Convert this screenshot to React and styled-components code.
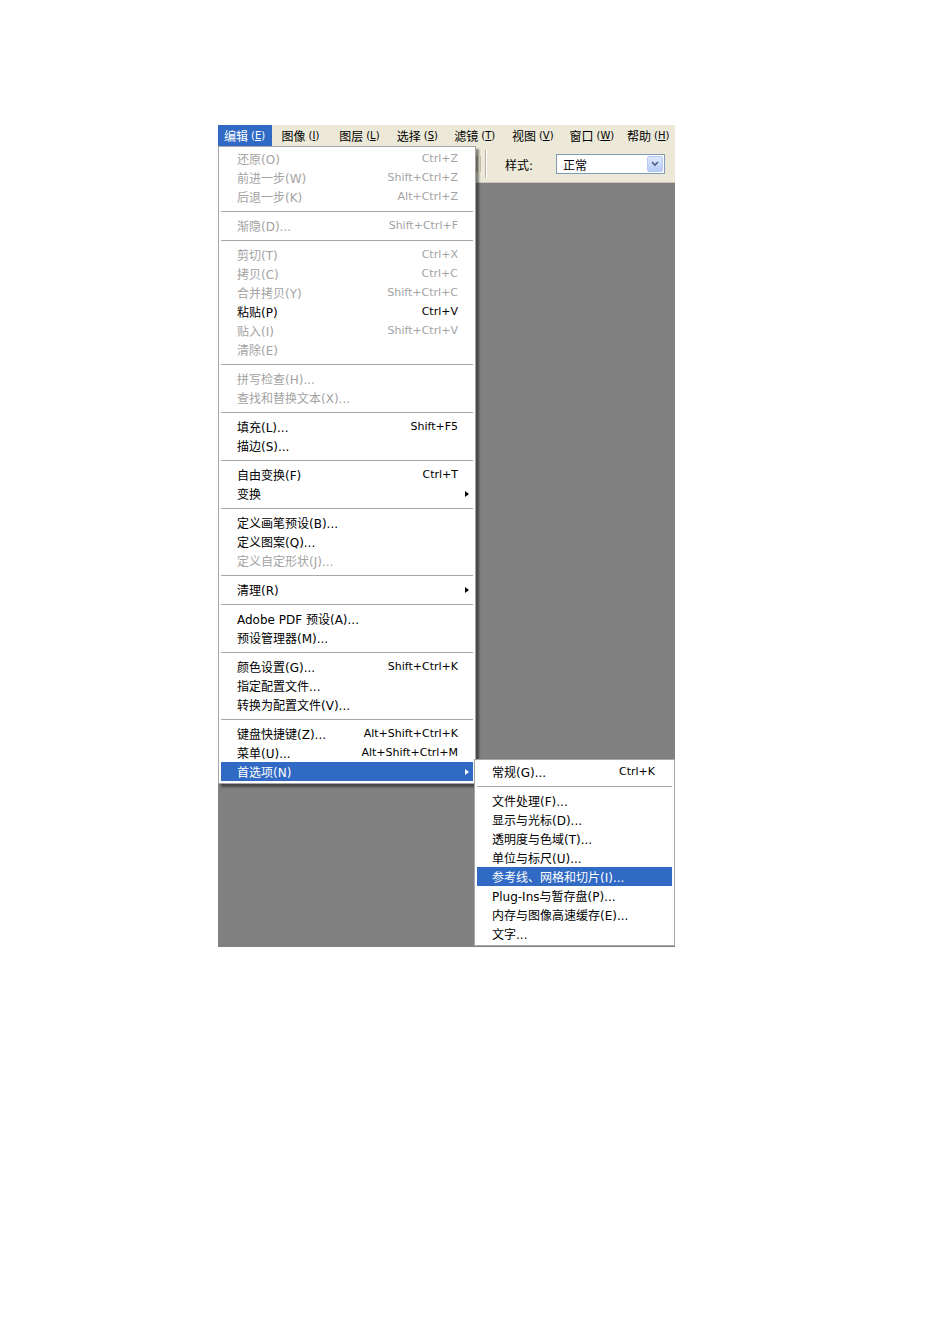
import React from "react";
import styled, { createGlobalStyle } from "styled-components";

const Global = createGlobalStyle`
  html, body { margin: 0; padding: 0; background: #fff; }
  body { font-family: "DejaVu Sans", "Noto Sans CJK SC", sans-serif; }
`;

const Page = styled.div`
  width: 950px;
  height: 1344px;
  padding: 125px 0 0 218px;
  box-sizing: border-box;
`;

const Figure = styled.div`
  position: relative;
  width: 457px;
  height: 822px;
  display: flex;
  flex-direction: column;
  font-family: "DejaVu Sans", "Noto Sans CJK SC", sans-serif;
  font-size: 12px;
  color: #000;
`;

const MenuBar = styled.div`
  height: 21px;
  background: #ece9d8;
  display: flex;
  align-items: stretch;
  gap: 3.6px;
`;

const MenuTitle = styled.div`
  width: 54px;
  box-sizing: border-box;
  padding-left: 6px;
  display: flex;
  align-items: center;
  white-space: nowrap;
  font-family: "Noto Sans CJK SC", sans-serif;
  background: ${(p) => (p.$active ? "#316ac5" : "transparent")};
  color: ${(p) => (p.$active ? "#fff" : "#000")};
`;

const Mnemonic = styled.span`
  font-family: "DejaVu Sans", sans-serif;
  font-size: 10px;
  margin-left: 3px;
  & u { text-decoration: underline; }
`;

const Toolbar = styled.div`
  height: 37px;
  box-sizing: border-box;
  background: #ece9d8;
  border-bottom: 1px solid #c9c6b8;
  display: flex;
  align-items: center;
  padding-left: 258px;
`;

const ToolStub = styled.div`
  width: 5px;
  height: 16px;
  border-left: 2px solid #b8b5a8;
  border-right: 1px solid #c9c6b8;
  box-sizing: border-box;
`;

const ToolSep = styled.div`
  width: 1px;
  height: 28px;
  background: #b5b2a4;
  border-right: 1px solid #fff;
  margin-left: 4px;
`;

const ToolLabel = styled.span`
  margin-left: 18px;
  width: 33px;
  font-size: 12px;
`;

const Select = styled.div`
  margin-left: 18px;
  width: 109px;
  height: 20px;
  box-sizing: border-box;
  background: #fff;
  border: 1px solid #7f9db9;
  display: flex;
  align-items: center;
  padding-left: 6px;
  font-size: 12px;
`;

const SelectText = styled.span`
  flex: 1;
`;

const SelectBtn = styled.div`
  width: 16px;
  height: 16px;
  margin-right: 1px;
  border-radius: 2px;
  background: linear-gradient(#dde8fd, #b7cdf7);
  border: 1px solid #b6c9ef;
  box-sizing: border-box;
  display: flex;
  align-items: center;
  justify-content: center;
`;

const Canvas = styled.div`
  flex: 1;
  background: #808080;
`;

const Menu = styled.div`
  position: absolute;
  left: ${(p) => p.$left}px;
  top: ${(p) => p.$top}px;
  width: ${(p) => p.$width}px;
  box-sizing: border-box;
  background: #fff;
  border: 1px solid #a7a6aa;
  padding: 2px 0;
  box-shadow: ${(p) => (p.$shadow ? "3px 3px 2px rgba(0,0,0,0.45)" : "none")};
`;

const Row = styled.div`
  height: 19px;
  margin: 0 2px;
  display: grid;
  grid-template-columns: 1fr auto ${(p) => p.$right}px;
  align-items: center;
  padding-left: ${(p) => p.$left}px;
  white-space: nowrap;
  background: ${(p) => (p.$hi ? "#316ac5" : "transparent")};
  color: ${(p) => (p.$hi ? "#fff" : p.$dis ? "#a3a3a3" : "#000")};
`;

const Label = styled.span`
  font-size: 12px;
`;

const Shortcut = styled.span`
  text-align: right;
  font-size: 11px;
`;

const ArrowCell = styled.span`
  display: flex;
  justify-content: flex-end;
  padding-right: 4px;
`;

const Arrow = styled.span`
  width: 0;
  height: 0;
  border-left: 4px solid ${(p) => (p.$hi ? "#fff" : "#000")};
  border-top: 3.5px solid transparent;
  border-bottom: 3.5px solid transparent;
`;

const Separator = styled.div`
  height: 10px;
  display: flex;
  align-items: center;
  margin: 0 2px;
  &::after {
    content: "";
    flex: 1;
    height: 1px;
    background: #a7a6aa;
  }
`;

const titles = [
  ["编辑", "E"],
  ["图像", "I"],
  ["图层", "L"],
  ["选择", "S"],
  ["滤镜", "T"],
  ["视图", "V"],
  ["窗口", "W"],
  ["帮助", "H"],
];

const mainItems = [
  ["还原(O)", "Ctrl+Z", "d"],
  ["前进一步(W)", "Shift+Ctrl+Z", "d"],
  ["后退一步(K)", "Alt+Ctrl+Z", "d"],
  "-",
  ["渐隐(D)...", "Shift+Ctrl+F", "d"],
  "-",
  ["剪切(T)", "Ctrl+X", "d"],
  ["拷贝(C)", "Ctrl+C", "d"],
  ["合并拷贝(Y)", "Shift+Ctrl+C", "d"],
  ["粘贴(P)", "Ctrl+V"],
  ["贴入(I)", "Shift+Ctrl+V", "d"],
  ["清除(E)", "", "d"],
  "-",
  ["拼写检查(H)...", "", "d"],
  ["查找和替换文本(X)...", "", "d"],
  "-",
  ["填充(L)...", "Shift+F5"],
  ["描边(S)..."],
  "-",
  ["自由变换(F)", "Ctrl+T"],
  ["变换", "", "a"],
  "-",
  ["定义画笔预设(B)..."],
  ["定义图案(Q)..."],
  ["定义自定形状(J)...", "", "d"],
  "-",
  ["清理(R)", "", "a"],
  "-",
  ["Adobe PDF 预设(A)..."],
  ["预设管理器(M)..."],
  "-",
  ["颜色设置(G)...", "Shift+Ctrl+K"],
  ["指定配置文件..."],
  ["转换为配置文件(V)..."],
  "-",
  ["键盘快捷键(Z)...", "Alt+Shift+Ctrl+K"],
  ["菜单(U)...", "Alt+Shift+Ctrl+M"],
  ["首选项(N)", "", "ah"],
];

const subItems = [
  ["常规(G)...", "Ctrl+K"],
  "-",
  ["文件处理(F)..."],
  ["显示与光标(D)..."],
  ["透明度与色域(T)..."],
  ["单位与标尺(U)..."],
  ["参考线、网格和切片(I)...", "", "h"],
  ["Plug-Ins与暂存盘(P)..."],
  ["内存与图像高速缓存(E)..."],
  ["文字..."],
];

function renderItems(items, left, right) {
  return items.map((it, i) => {
    if (it === "-") return <Separator key={i} />;
    const [label, sc = "", flags = ""] = it;
    const hi = flags.includes("h");
    return (
      <Row key={i} $left={left} $right={right} $hi={hi} $dis={flags.includes("d")}>
        <Label>{label}</Label>
        <Shortcut>{sc}</Shortcut>
        <ArrowCell>{flags.includes("a") && <Arrow $hi={hi} />}</ArrowCell>
      </Row>
    );
  });
}

export default function App() {
  return (
    <>
      <Global />
      <Page>
        <Figure>
          <MenuBar>
            {titles.map(([t, m], i) => (
              <MenuTitle key={t} $active={i === 0}>
                {t}
                <Mnemonic>
                  (<u>{m}</u>)
                </Mnemonic>
              </MenuTitle>
            ))}
          </MenuBar>
          <Toolbar>
            <ToolStub />
            <ToolSep />
            <ToolLabel>样式:</ToolLabel>
            <Select>
              <SelectText>正常</SelectText>
              <SelectBtn>
                <svg width="8" height="6" viewBox="0 0 8 6">
                  <path d="M1 1 L4 4 L7 1" fill="none" stroke="#4d6185" strokeWidth="1.6" />
                </svg>
              </SelectBtn>
            </Select>
          </Toolbar>
          <Canvas />
          <Menu $left={0} $top={21} $width={258} $shadow>
            {renderItems(mainItems, 16, 15)}
          </Menu>
          <Menu $left={256} $top={634} $width={201}>
            {renderItems(subItems, 15, 17)}
          </Menu>
        </Figure>
      </Page>
    </>
  );
}
